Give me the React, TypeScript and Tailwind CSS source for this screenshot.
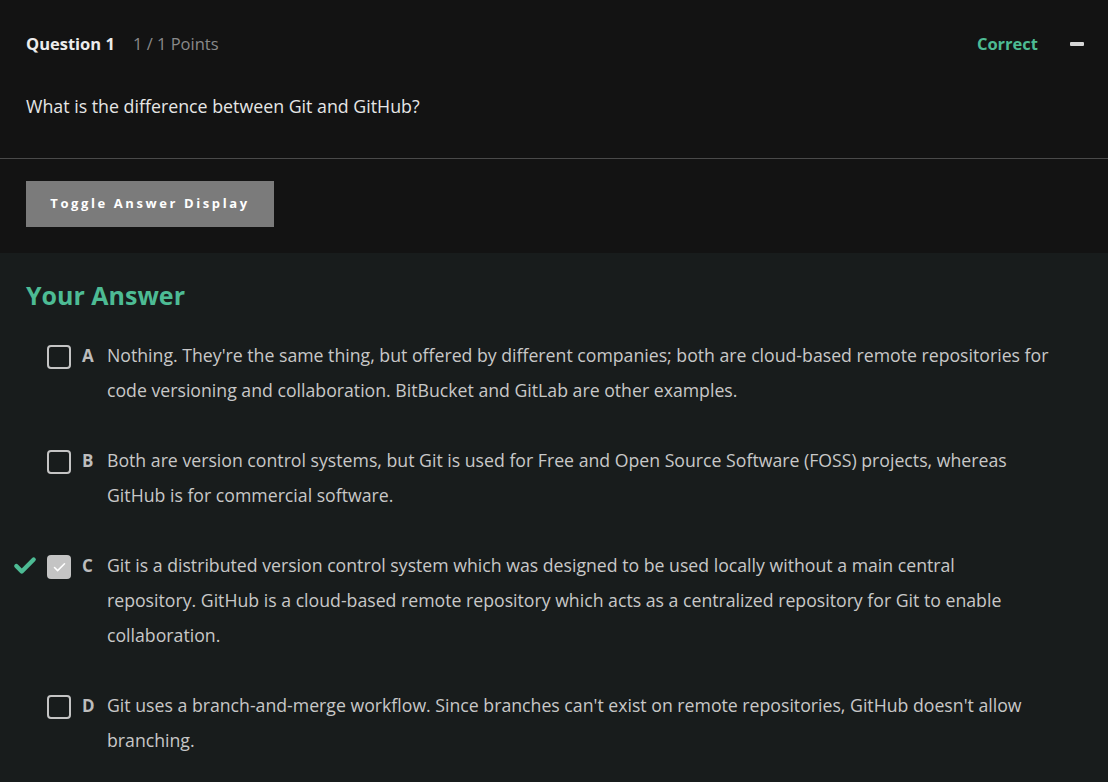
import React from 'react';
import { Check } from 'lucide-react';

const options = [
  {
    letter: 'A',
    lines: [
      "Nothing. They're the same thing, but offered by different companies; both are cloud-based remote repositories for code versioning and collaboration. BitBucket and GitLab are other examples.",
    ],
    selected: false,
  },
  {
    letter: 'B',
    lines: [
      'Both are version control systems, but Git is used for Free and Open Source Software (FOSS) projects, whereas GitHub is for commercial software.',
    ],
    selected: false,
  },
  {
    letter: 'C',
    lines: [
      'Git is a distributed version control system which was designed to be used locally without a main central',
      'repository. GitHub is a cloud-based remote repository which acts as a centralized repository for Git to enable collaboration.',
    ],
    selected: true,
  },
  {
    letter: 'D',
    lines: [
      "Git uses a branch-and-merge workflow. Since branches can't exist on remote repositories, GitHub doesn't allow branching.",
    ],
    selected: false,
  },
];

const App: React.FC = () => {
  return (
    <div className="min-h-screen bg-[#181c1c] font-['Open_Sans',sans-serif]">
      {/* Question header */}
      <div className="bg-[#131313]">
        <div className="pl-[26px] pr-[24px] pt-[33px] pb-[40px] border-b border-[#4a4a4a]">
          <div className="flex items-center h-[22px]">
            <span className="text-[16.5px] font-bold text-[#ececec]">Question 1</span>
            <span className="ml-[18px] text-[16.5px] text-[#8a8a8a]">1 / 1 Points</span>
            <span className="ml-auto text-[16.5px] font-bold text-[#4dbb94]">Correct</span>
            <div className="ml-[32px] w-[14px] h-[4px] rounded-[1px] bg-[#d6d6d6]" />
          </div>
          <p className="mt-[39px] text-[17.8px] leading-[24px] text-[#e6e6e6]">
            What is the difference between Git and GitHub?
          </p>
        </div>
        <div className="px-[26px] pt-[22px] pb-[26px]">
          <button className="w-[248px] h-[46px] bg-[#7b7b7b] text-white text-[13px] font-bold tracking-[0.2em]">
            Toggle Answer Display
          </button>
        </div>
      </div>

      {/* Your answer */}
      <div className="px-[26px] pt-[27px] pb-[20px]">
        <h2 className="text-[25px] leading-[30px] font-bold text-[#4dbb94]">Your Answer</h2>
        <div className="mt-[28px] flex flex-col gap-[35px]">
          {options.map((o) => (
            <div key={o.letter} className="relative flex items-start">
              {o.selected && (
                <Check
                  className="absolute left-[-14px] top-[5px] w-[26px] h-[26px] text-[#4dbb94]"
                  strokeWidth={4}
                />
              )}
              <div
                className={`ml-[21px] mt-[7px] w-[24px] h-[24px] shrink-0 rounded-[4px] flex items-center justify-center ${
                  o.selected ? 'bg-[#c4c4c4]' : 'border-2 border-[#c4c4c4]'
                }`}
              >
                {o.selected && <Check className="w-[15px] h-[15px] text-white" strokeWidth={2.5} />}
              </div>
              <span className="ml-[11px] w-[14px] shrink-0 text-[17px] leading-[35px] font-bold text-[#bdbdbd]">
                {o.letter}
              </span>
              <p className="ml-[11px] mr-[30px] text-[17.7px] leading-[35px] text-[#c8c8c8]">
                {o.lines.map((line, i) => (
                  <React.Fragment key={i}>
                    {i > 0 && <br />}
                    {line}
                  </React.Fragment>
                ))}
              </p>
            </div>
          ))}
        </div>
      </div>
    </div>
  );
};

export default App;
